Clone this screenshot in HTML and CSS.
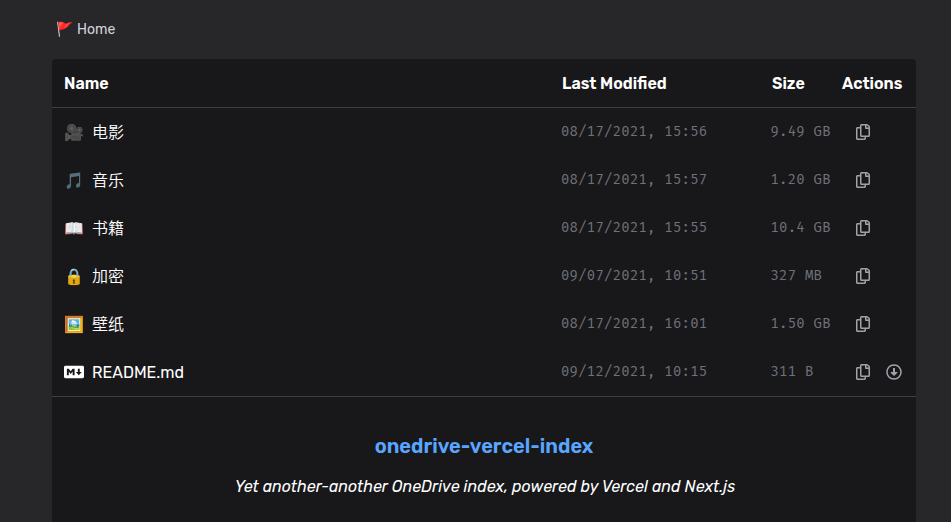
FILE: index.html
```
<!DOCTYPE html>
<html lang="en">
<head>
<meta charset="utf-8">
<title>Home</title>
<link rel="stylesheet" href="styles.css">
</head>
<body>
<svg class="defs" aria-hidden="true">
<symbol id="copy" viewBox="0 0 448 512"><path d="M433.941 65.941l-51.882-51.882A48 48 0 0 0 348.118 0H176c-26.51 0-48 21.49-48 48v48H48c-26.51 0-48 21.49-48 48v320c0 26.51 21.49 48 48 48h224c26.51 0 48-21.49 48-48v-48h80c26.51 0 48-21.49 48-48V99.882a48 48 0 0 0-14.059-33.941zM266 464H54a6 6 0 0 1-6-6V150a6 6 0 0 1 6-6h74v224c0 26.51 21.49 48 48 48h96v42a6 6 0 0 1-6 6zm128-96H182a6 6 0 0 1-6-6V54a6 6 0 0 1 6-6h106v88c0 13.255 10.745 24 24 24h88v202a6 6 0 0 1-6 6zm6-256h-64V48h9.632c1.591 0 3.117.632 4.243 1.757l48.368 48.368a6 6 0 0 1 1.757 4.243V112z"/></symbol>
<symbol id="down" viewBox="0 0 512 512"><path d="M256 8C119 8 8 119 8 256s111 248 248 248 248-111 248-248S393 8 256 8zm0 448c-110.5 0-200-89.5-200-200S145.5 56 256 56s200 89.5 200 200-89.5 200-200 200zm-32-316v116h-67c-10.7 0-16 12.9-8.5 20.5l99 99c4.7 4.7 12.3 4.7 17 0l99-99c7.6-7.6 2.2-20.5-8.5-20.5h-67V140c0-6.6-5.4-12-12-12h-40c-6.6 0-12 5.4-12 12z"/></symbol>
</svg>
<nav class="crumbs"><span class="flag">🚩</span><span>Home</span></nav>
<main class="card">
<div class="row head"><span>Name</span><span class="h-date">Last Modified</span><span class="h-size">Size</span><span class="h-act">Actions</span></div>
<div class="list">
<div class="row"><div class="name"><i class="emoji">🎥</i><span>电影</span></div><span class="mono">08/17/2021, 15:56</span><span class="mono size">9.49 GB</span><div class="actions"><svg class="copy"><use href="#copy"/></svg></div></div>
<div class="row"><div class="name"><i class="emoji">🎵</i><span>音乐</span></div><span class="mono">08/17/2021, 15:57</span><span class="mono size">1.20 GB</span><div class="actions"><svg class="copy"><use href="#copy"/></svg></div></div>
<div class="row"><div class="name"><i class="emoji">📖</i><span>书籍</span></div><span class="mono">08/17/2021, 15:55</span><span class="mono size">10.4 GB</span><div class="actions"><svg class="copy"><use href="#copy"/></svg></div></div>
<div class="row"><div class="name"><i class="emoji">🔒</i><span>加密</span></div><span class="mono">09/07/2021, 10:51</span><span class="mono size">327 MB</span><div class="actions"><svg class="copy"><use href="#copy"/></svg></div></div>
<div class="row"><div class="name"><i class="emoji">🖼️</i><span>壁纸</span></div><span class="mono">08/17/2021, 16:01</span><span class="mono size">1.50 GB</span><div class="actions"><svg class="copy"><use href="#copy"/></svg></div></div>
<div class="row"><div class="name"><svg class="md" viewBox="0 0 640 512"><path d="M593.8 59.1H46.2C20.7 59.1 0 79.8 0 105.2v301.5c0 25.5 20.7 46.2 46.2 46.2h547.7c25.5 0 46.2-20.7 46.1-46.1V105.2c0-25.4-20.7-46.1-46.2-46.1zM338.5 360.6H277v-120l-61.5 76.9-61.5-76.9v120H92.3V151.4h61.5l61.5 76.9 61.5-76.9h61.5v209.2zm135.3 3.1L381.5 256H443V151.4h61.5V256H566z"/></svg><span class="file">README.md</span></div><span class="mono">09/12/2021, 10:15</span><span class="mono size">311 B</span><div class="actions"><svg class="copy"><use href="#copy"/></svg><svg class="down"><use href="#down"/></svg></div></div>
</div>
<section class="readme">
<h1>onedrive-vercel-index</h1>
<p>Yet another-another OneDrive index, powered by Vercel and Next.js</p>
</section>
</main>
</body>
</html>
```
FILE: styles.css
```
* { box-sizing: border-box; }
body {
  margin: 0;
  height: 522px;
  overflow: hidden;
  background: #27272a;
  color: #fff;
  font: 400 16px/24px Rubik, Roboto, "Noto Sans CJK SC", sans-serif;
}
.defs { display: none; }
.crumbs {
  display: flex;
  align-items: center;
  height: 59px;
  padding: 0 0 0 56px;
  font-size: 14px;
  line-height: 20px;
  color: #d4d4d8;
}
.flag { width: 21px; font-size: 14px; }
.card {
  width: 864px;
  height: 480px;
  margin-left: 52px;
  background: #18181b;
  border-radius: 4px;
}
.row {
  display: grid;
  grid-template-columns: 497px 209px 73px 1fr;
  align-items: center;
  height: 48px;
  padding: 0 12px;
}
.head {
  height: 49px;
  padding-top: 2px;
  border-bottom: 1px solid #3f3f46;
  font-weight: 600;
}
.h-date, .h-size { padding-left: 1px; }
.h-size { padding-left: 2px; }
.h-act { margin-left: -1px; }
.list { border-bottom: 1px solid #3f3f46; }
.name { display: flex; align-items: center; gap: 8px; font-weight: 350; }
.name span, .emoji { padding-top: 2px; }
.name .file { font-weight: 400; }
.emoji { width: 20px; font-style: normal; white-space: nowrap; text-align: center; }
.md { width: 20px; height: 16px; fill: #fff; }
.mono {
  font: 14px/20px "Fira Mono", "DejaVu Sans Mono", monospace;
  letter-spacing: 0.21px;
  color: #71717a;
  white-space: nowrap;
}
.size { padding-left: 0.5px; }
.actions { display: flex; align-items: center; gap: 16px; padding-left: 13px; }
.actions svg { fill: #a1a1aa; flex: none; }
.copy { width: 14px; height: 16px; }
.down { width: 16px; height: 16px; }
.readme { padding-top: 34px; text-align: center; }
.readme h1 { margin: 0; font-size: 20px; line-height: 30px; font-weight: 600; color: #58a6ff; }
.readme p { margin: 14px 0 0; padding-left: 2px; font-style: italic; }
```
